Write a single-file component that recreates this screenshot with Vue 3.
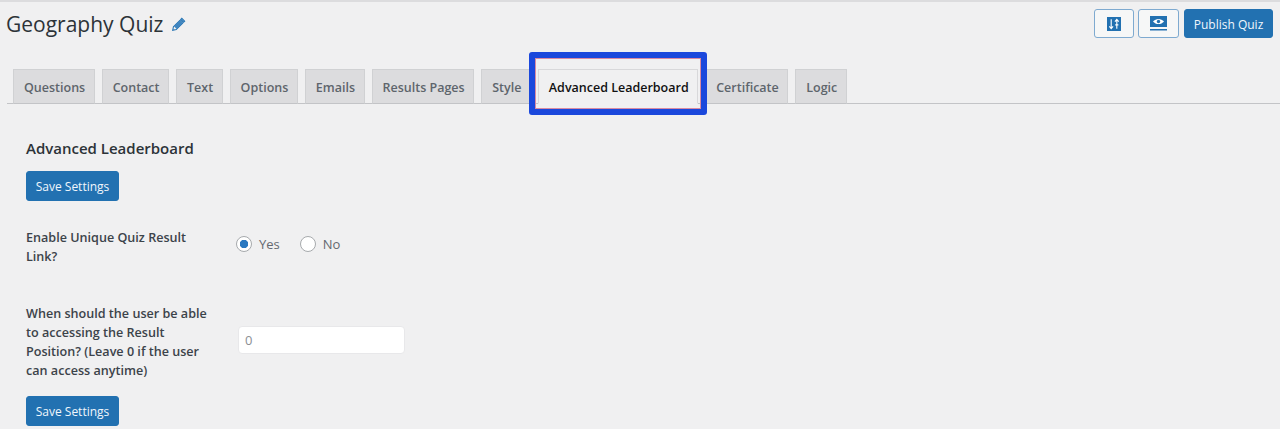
<script setup>
const tabs = ['Questions','Contact','Text','Options','Emails','Results Pages','Style','Advanced Leaderboard','Certificate','Logic']
const active = 'Advanced Leaderboard'
</script>

<template>
  <div class="page">
    <header class="top">
      <div class="title-wrap">
        <h1 class="title">Geography Quiz</h1>
        <svg class="pencil" viewBox="0 0 16 16" width="15" height="15">
          <path d="M11.600 1.400l3 3-1.300 1.300-3-3zM9.400 3.600l3 3-6.800 6.800-3.800 .8 .8-3.800z" fill="none" stroke="#2271b1" stroke-width="1.100"/>
          <path d="M11.600 1.400l3 3-1.300 1.300-3-3zM9.400 3.600l3 3-6.300 6.300-3-3z" fill="#3f86c0"/>
        </svg>
      </div>
      <div class="actions">
        <button class="icon-btn">
          <svg viewBox="0 0 15 15" width="14" height="14">
            <rect width="15" height="15" fill="#2271b1"/>
            <path d="M4.500 2.500v10M2.500 10l2 2.500 2-2.500M10.500 12.500v-10M8.500 5l2-2.500 2 2.500M8.800 8.500h3.400" stroke="#fff" stroke-width="1.200" fill="none"/>
          </svg>
        </button>
        <button class="icon-btn wide">
          <svg viewBox="0 0 17 15" width="17" height="15">
            <rect x="0" y="0" width="17" height="11" fill="#2271b1"/>
            <path d="M3 5.500c2.800-3.400 8.200-3.400 11 0-2.800 3.400-8.200 3.400-11 0z" fill="#fff"/>
            <circle cx="8.500" cy="5.500" r="1.700" fill="#2271b1"/>
            <rect x="0" y="13" width="17" height="1.500" fill="#2271b1"/>
          </svg>
        </button>
        <button class="primary publish">Publish Quiz</button>
      </div>
    </header>

    <nav class="tabs">
      <a v-for="t in tabs" :key="t" class="tab" :class="{ active: t === active }">{{ t }}</a>
    </nav>

    <main class="content">
      <h2 class="heading">Advanced Leaderboard</h2>
      <button class="primary save">Save Settings</button>

      <div class="row radio-row">
        <label class="label">Enable Unique Quiz Result Link?</label>
        <div class="options">
          <span class="radio checked"></span><span class="opt">Yes</span>
          <span class="radio second"></span><span class="opt">No</span>
        </div>
      </div>

      <div class="row input-row">
        <label class="label">When should the user be able to accessing the Result Position? (Leave 0 if the user can access anytime)</label>
        <input class="num" placeholder="0" />
      </div>

      <button class="primary save last">Save Settings</button>
    </main>

    <div class="highlight"></div>
  </div>
</template>

<style>
html, body { margin: 0; background: #f0f0f1; }
</style>

<style scoped>
.page {
  position: relative;
  height: 429px;
  overflow: hidden;
  box-sizing: border-box;
  border-top: 2px solid #dcdcde;
  background: #f0f0f1;
  font-family: "Open Sans", "Noto Sans", sans-serif;
  color: #3c434a;
}
.top {
  display: flex;
  justify-content: space-between;
  padding: 7px 7px 0 6px;
  height: 67px;
  box-sizing: border-box;
}
.title-wrap { display: flex; align-items: flex-start; gap: 8px; }
.title {
  margin: 0;
  font-size: 21px;
  font-weight: 400;
  line-height: 30px;
  color: #2c3338;
}
.pencil { margin-top: 8px; }
.actions { display: flex; gap: 4px; align-items: flex-start; }
.icon-btn {
  width: 40px;
  height: 29px;
  padding: 0;
  display: flex;
  align-items: center;
  justify-content: center;
  background: #f6f7f7;
  border: 1px solid #7eaad0;
  border-radius: 3px;
}
.icon-btn.wide { width: 41px; }
.primary {
  background: #2271b1;
  color: #f0f6fc;
  border: 1px solid #2271b1;
  border-radius: 3px;
  font-family: inherit;
  font-size: 12px;
  padding: 1px 0 0;
}
.publish { width: 89px; height: 29px; margin-left: 1px; }
.tabs {
  display: flex;
  gap: 7px;
  margin-left: 7px;
  padding-left: 6px;
  height: 35px;
  box-sizing: border-box;
  border-bottom: 1px solid #c3c4c7;
}
.tab {
  box-sizing: border-box;
  height: 35px;
  padding: 1px 8.500px 0 10px;
  display: flex;
  align-items: center;
  background: #dcdcde;
  border: 1px solid #d0d1d3;
  border-bottom: 1px solid #c3c4c7;
  font-size: 12.500px;
  font-weight: 600;
  color: #5e656c;
}
.tab.active {
  background: #f0f0f1;
  border-color: #d8d8da;
  border-bottom-color: #f0f0f1;
  color: #111;
}
.content { padding: 0 26px; }
.heading {
  margin: 0;
  padding-top: 34px;
  font-size: 15px;
  font-weight: 600;
  line-height: 20px;
  color: #2c3338;
}
.save { display: block; width: 93px; height: 30px; margin-top: 13px; }
.row { display: flex; align-items: flex-start; }
.label {
  width: 186px;
  margin-right: 26px;
  font-size: 12.600px;
  font-weight: 600;
  line-height: 19px;
  color: #3c434a;
}
.radio-row { margin-top: 27px; height: 76px; }
.options { display: flex; align-items: center; height: 32px; margin-left: -2px; font-size: 13px; }
.radio {
  box-sizing: border-box;
  width: 16px;
  height: 16px;
  border-radius: 50%;
  background: #fff;
  border: 1px solid #a7aaad;
  margin-right: 7px;
}
.radio.checked {
  background: radial-gradient(circle, #2a78c0 0 4px, #fff 4.500px);
}
.radio.second { margin-left: 20px; }
.opt { color: #646970; }
.num {
  box-sizing: border-box;
  flex: none;
  width: 167px;
  height: 28px;
  margin-top: 22px;
  border: 1px solid #e8e8ea;
  border-radius: 4px;
  background: #fff;
  padding: 0 6px;
  font-family: inherit;
  font-size: 13px;
}
.num::placeholder { color: #8c8f94; }
.last { margin-top: 16px; }
.highlight {
  position: absolute;
  left: 529px;
  top: 50px;
  width: 178px;
  height: 63px;
  box-sizing: border-box;
  border: 6px solid #1b48dc;
  border-radius: 3px;
  outline: 1px solid #d98aa2;
  outline-offset: -7px;
  pointer-events: none;
}
</style>
